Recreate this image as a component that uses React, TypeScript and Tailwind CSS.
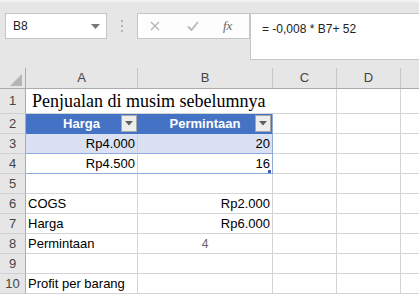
import React from "react"

const sans = "font-['Liberation_Sans',Arial,sans-serif]"
const grid = "border-[#d4d4d4]"

type Cell = {
  text?: string
  align?: "left" | "right" | "center"
  className?: string
}

function Filter() {
  return (
    <span className="absolute right-[1px] top-[1px] flex h-[17px] w-[16px] items-center justify-center border border-[#a6a6a6] bg-[#ededed]">
      <svg width="8" height="5" viewBox="0 0 8 5">
        <path d="M0 0h8L4 4.5z" fill="#5f5f5f" />
      </svg>
    </span>
  )
}

function RowHead({ n, h }: { n: number; h: string }) {
  return (
    <div
      className={`flex w-[26px] shrink-0 items-center justify-center border-r border-b border-r-[#ababab] border-b-[#d0d0d0] bg-[#e6e6e6] text-[13px] text-[#444] ${h}`}
    >
      {n}
    </div>
  )
}

function Row({ n, h, a, b }: { n: number; h: string; a: Cell; b: Cell }) {
  const cell = (c: Cell, w: string) => (
    <div
      className={`relative flex shrink-0 items-center overflow-visible whitespace-nowrap border-r border-b px-[2px] ${w} ${
        c.align === "right" ? "justify-end" : c.align === "center" ? "justify-center" : "justify-start"
      } ${c.className ?? grid}`}
    >
      {c.text}
    </div>
  )
  return (
    <div className={`flex ${h}`}>
      <RowHead n={n} h={h} />
      {cell(a, "w-[112px]")}
      {cell(b, "w-[135px]")}
      <div className={`w-[64px] shrink-0 border-r border-b ${grid}`} />
      <div className={`w-[64px] shrink-0 border-r border-b ${grid}`} />
      <div className={`flex-1 border-b ${grid}`} />
    </div>
  )
}

export default function App() {
  return (
    <div className={`h-[294px] w-[419px] overflow-hidden bg-white text-[13px] text-black ${sans}`}>
      {/* formula bar */}
      <div className="relative h-[68px] border-t-[2px] border-t-[#f3f3f3] bg-[#e6e6e6]">
        <div className="absolute left-[5px] top-[11px] flex h-[26px] w-[102px] items-center justify-between border border-[#c6c6c6] bg-white pl-[7px] pr-[6px] text-[12px] text-[#222]">
          <span>B8</span>
          <svg width="9" height="5" viewBox="0 0 9 5">
            <path d="M0 0h9L4.5 5z" fill="#777" />
          </svg>
        </div>
        <div className="absolute left-[121px] top-[18px] flex flex-col gap-[3px]">
          <span className="h-[2px] w-[2px] bg-[#b4b4b4]" />
          <span className="h-[2px] w-[2px] bg-[#b4b4b4]" />
          <span className="h-[2px] w-[2px] bg-[#b4b4b4]" />
        </div>
        <div className="absolute left-[137px] top-[11px] flex h-[26px] w-[113px] items-center border border-[#c6c6c6] bg-[#fdfdfd]">
          <svg className="ml-[12px]" width="10" height="10" viewBox="0 0 10 10">
            <path d="M1 1l8 8M9 1l-8 8" stroke="#b3b3b3" strokeWidth="1.3" />
          </svg>
          <svg className="ml-[27px]" width="12" height="10" viewBox="0 0 12 10">
            <path d="M1 5.5l3.5 3.5L11 1" stroke="#b8b8b8" strokeWidth="1.8" fill="none" />
          </svg>
          <span className="ml-[24px] font-['Liberation_Serif',serif] text-[13px] italic text-[#666]">fx</span>
        </div>
        <div className="absolute left-[250px] right-0 top-[11px] h-[47px] border border-r-0 border-[#c6c6c6] bg-[#fefefe] pl-[11px] pt-[6px] text-[12px] text-[#222]">
          = -0,008 * B7+ 52
        </div>
      </div>

      {/* column headers */}
      <div className="flex h-[21px] border-b border-[#ababab] bg-[#e6e6e6] text-[13px] text-[#444]">
        <div className="relative w-[26px] shrink-0 border-r border-[#ababab]">
          <svg className="absolute bottom-[2px] right-[3px]" width="12" height="12" viewBox="0 0 12 12">
            <path d="M12 0v12H0z" fill="#b4b4b4" />
          </svg>
        </div>
        <div className="flex w-[112px] shrink-0 items-center justify-center border-r border-[#c6c6c6]">A</div>
        <div className="flex w-[135px] shrink-0 items-center justify-center border-r border-[#c6c6c6]">B</div>
        <div className="flex w-[64px] shrink-0 items-center justify-center border-r border-[#c6c6c6]">C</div>
        <div className="flex w-[64px] shrink-0 items-center justify-center border-r border-[#c6c6c6]">D</div>
        <div className="flex-1" />
      </div>

      <div className="flex h-[25px]">
        <RowHead n={1} h="h-[25px]" />
        <div className={`flex w-[247px] shrink-0 items-center border-b ${grid} pl-[6px] font-['Liberation_Serif',serif] text-[18px] whitespace-nowrap`}>
          Penjualan di musim sebelumnya
        </div>
        <div className={`w-[64px] shrink-0 border-r border-b ${grid}`} />
        <div className={`w-[64px] shrink-0 border-r border-b ${grid}`} />
        <div className={`flex-1 border-b ${grid}`} />
      </div>

      <div className="flex h-[20px]">
        <RowHead n={2} h="h-[20px]" />
        <div className="relative flex w-[112px] shrink-0 items-center justify-center bg-[#4472c4] pr-[1px] font-bold text-white">
          Harga
          <Filter />
        </div>
        <div className="relative flex w-[135px] shrink-0 items-center justify-center border-r border-[#8ea9db] bg-[#4472c4] font-bold text-white">
          Permintaan
          <Filter />
        </div>
        <div className={`w-[64px] shrink-0 border-r border-b ${grid}`} />
        <div className={`w-[64px] shrink-0 border-r border-b ${grid}`} />
        <div className={`flex-1 border-b ${grid}`} />
      </div>

      <Row
        n={3}
        h="h-[20px]"
        a={{ text: "Rp4.000", align: "right", className: "bg-[#d9e1f2] border-b-[#8ea9db] border-r-[#c9d2e4]" }}
        b={{ text: "20", align: "right", className: "bg-[#d9e1f2] border-b-[#8ea9db] border-r-[#8ea9db]" }}
      />
      <div className="relative">
        <Row
          n={4}
          h="h-[20px]"
          a={{ text: "Rp4.500", align: "right", className: "border-b-[#8ea9db] border-r-[#d4d4d4]" }}
          b={{ text: "16", align: "right", className: "border-b-[#8ea9db] border-r-[#8ea9db]" }}
        />
        <span className="absolute left-[268px] top-[16px] h-[3px] w-[3px] bg-[#3a5fb0]" />
      </div>
      <Row n={5} h="h-[20px]" a={{}} b={{}} />
      <Row n={6} h="h-[20px]" a={{ text: "COGS" }} b={{ text: "Rp2.000", align: "right" }} />
      <Row n={7} h="h-[20px]" a={{ text: "Harga" }} b={{ text: "Rp6.000", align: "right" }} />
      <Row
        n={8}
        h="h-[20px]"
        a={{ text: "Permintaan" }}
        b={{ text: "4", align: "center", className: `${grid} text-[12px] text-[#666]` }}
      />
      <Row n={9} h="h-[20px]" a={{}} b={{}} />
      <Row n={10} h="h-[20px]" a={{ text: "Profit per barang" }} b={{}} />
    </div>
  )
}
